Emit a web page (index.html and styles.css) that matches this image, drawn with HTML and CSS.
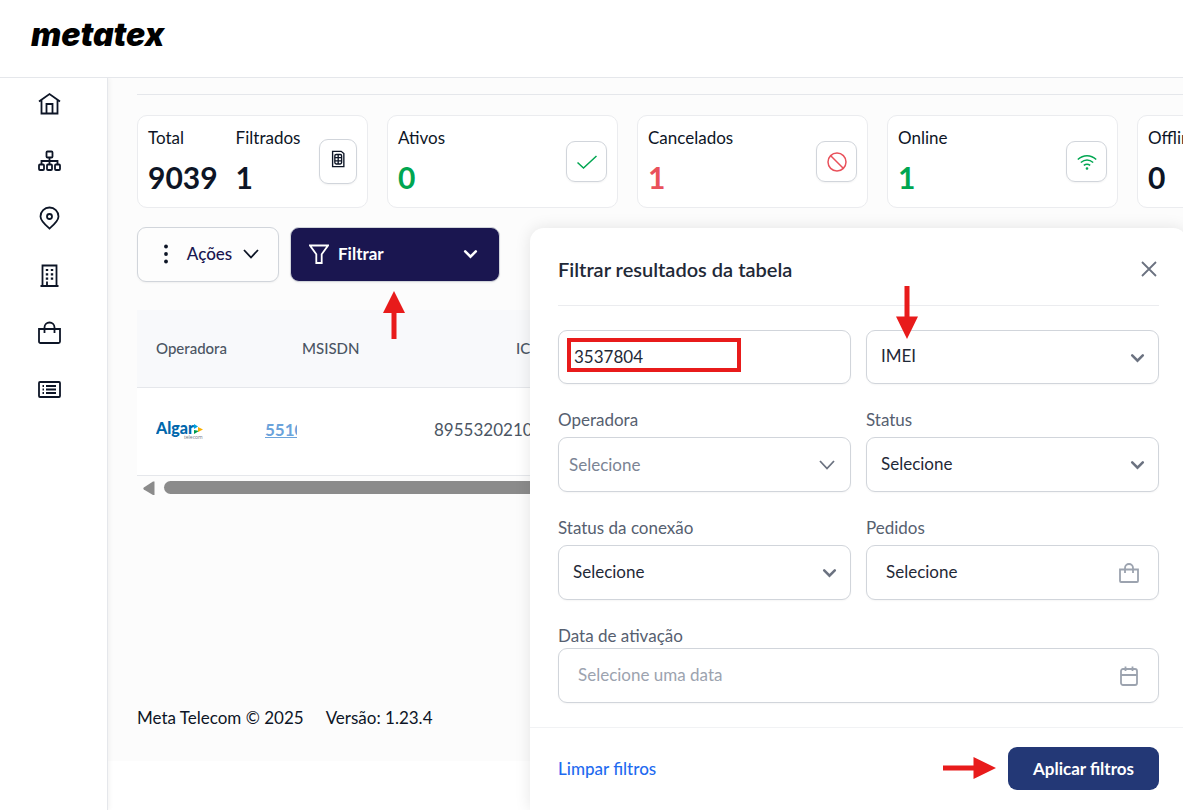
FILE: index.html
```html
<!DOCTYPE html>
<html lang="pt-BR">
<head>
    <meta charset="UTF-8">
    <meta name="viewport" content="width=device-width, initial-scale=1.0">
    <title>Metatex</title>
    <link rel="stylesheet" href="styles.css">
</head>
<body>
    <header class="topbar">
        <a href="#" class="brand">metatex</a>
    </header>
    <div class="layout">
        <nav class="sidebar" aria-label="Menu">
            <a href="#" aria-label="Início">
                <svg viewBox="0 0 24 24"><path d="M1 9.500 11.500 2 22 9.500M3.500 8v13.500h16V8M8.500 21.500V12h6v9.500"/></svg>
            </a>
            <a href="#" aria-label="Rede">
                <svg viewBox="0 0 24 24"><rect x="8.500" y="2.500" width="6" height="6" rx="1"/><rect x="1" y="15.500" width="5" height="5.500" rx="1"/><rect x="9" y="15.500" width="5" height="5.500" rx="1"/><rect x="17" y="15.500" width="5" height="5.500" rx="1"/><path d="M11.500 8.500v7M3.500 15.500V12h16v3.500"/></svg>
            </a>
            <a href="#" aria-label="Mapa">
                <svg viewBox="0 0 24 24"><path d="M11.500 22.500C8 19.500 2.500 15 2.500 10.500a9 9 0 0 1 18 0c0 4.500-5.500 9-9 12z"/><circle cx="11.500" cy="10.500" r="2.500"/></svg>
            </a>
            <a href="#" aria-label="Empresas">
                <svg viewBox="0 0 24 24"><path d="M4.500 22.500v-20h14v20M2.500 23h18M9 22.500v-4"/><path class="dots" d="M7.800 7h2.400M12.800 7h2.400M7.800 11.300h2.400M12.800 11.300h2.400M7.800 15.600h2.400M12.800 15.600h2.400"/></svg>
            </a>
            <a href="#" aria-label="Pedidos">
                <svg viewBox="0 0 24 24"><path d="M1 9h21v12.500a1.500 1.500 0 0 1-1.500 1.500h-18A1.500 1.500 0 0 1 1 21.500zM6.500 13V7.500a5 5 0 0 1 10 0V13"/></svg>
            </a>
            <a href="#" aria-label="Relatórios">
                <svg viewBox="0 0 24 24"><rect x="1" y="5" width="21" height="15" rx="1"/><path d="M4.500 9H6M8 9h10M4.500 12.500H6M8 12.500h10M4.500 16H6M8 16h10"/></svg>
            </a>
        </nav>

        <main class="content">
            <section class="cards">
                <div class="card">
                    <div class="stat"><span>Total</span><strong>9039</strong></div>
                    <div class="stat"><span>Filtrados</span><strong>1</strong></div>
                    <div class="card-icon tall">
                        <svg class="chip" viewBox="0 0 20 20"><path d="M4 1.500h9.500L16.500 4v14.500H4z"/><rect x="6.500" y="5" width="7.500" height="10.500" rx="1.500"/><path d="M6.500 8.500H14M6.500 12H14M10.200 5v10.500"/></svg>
                    </div>
                </div>
                <div class="card">
                    <div class="stat green"><span>Ativos</span><strong>0</strong></div>
                    <div class="card-icon green">
                        <svg viewBox="0 0 20 20"><path d="m.5 10.500 6 5.500L19.500 4"/></svg>
                    </div>
                </div>
                <div class="card">
                    <div class="stat red"><span>Cancelados</span><strong>1</strong></div>
                    <div class="card-icon red">
                        <svg viewBox="0 0 20 20"><circle cx="10" cy="10" r="9"/><path d="m3.500 3.500 13 13"/></svg>
                    </div>
                </div>
                <div class="card">
                    <div class="stat green"><span>Online</span><strong>1</strong></div>
                    <div class="card-icon green">
                        <svg viewBox="0 0 20 20"><path d="M.8 7.500c5.500-5 13-5 18.400 0M3.800 10.500c4-3.300 8.500-3.300 12.400 0M6.800 13.400c2.200-1.600 4.200-1.600 6.400 0"/><circle class="solid" cx="10" cy="16.500" r=".6"/></svg>
                    </div>
                </div>
                <div class="card">
                    <div class="stat"><span>Offline</span><strong>0</strong></div>
                </div>
            </section>

            <div class="toolbar">
                <button type="button" class="button is-light">
                    <svg class="more" viewBox="0 0 20 20"><circle cx="10" cy="2.500" r="1.900"/><circle cx="10" cy="10" r="1.900"/><circle cx="10" cy="17.500" r="1.900"/></svg>
                    Ações
                    <svg class="caret" viewBox="0 0 16 16"><path d="m1 4 7 7.500L15 4"/></svg>
                </button>
                <button type="button" class="button is-dark">
                    <svg class="funnel" viewBox="0 0 20 20"><path d="M1 1.500h18l-6.300 8.800v8.700H7.300v-8.700z"/></svg>
                    <span>Filtrar</span>
                    <svg class="chevron" viewBox="0 0 16 16"><path d="m3 6 5 5 5-5"/></svg>
                </button>
            </div>

            <div class="table-wrap">
                <table class="table">
                    <thead>
                        <tr><th class="col-op">Operadora</th><th class="col-msisdn">MSISDN</th><th class="col-iccid">ICCID</th></tr>
                    </thead>
                    <tbody>
                        <tr>
                            <td class="col-op">
                                <svg class="algar" viewBox="0 0 48 20" role="img" aria-label="Algar telecom">
                                    <text class="algar-name" x="0" y="14">Algar</text>
                                    <path fill="#00a3e0" d="m38 4 4 2.500-4 2.500z"/><path fill="#009b4c" d="m38 10 5 1-5 3z"/><path fill="#f9b000" d="m42 7 5 2.500-5 2.500z"/>
                                    <text class="algar-sub" x="28" y="19">telecom</text>
                                </svg>
                            </td>
                            <td><a href="#" class="number">551099</a></td>
                            <td>89553202100012</td>
                        </tr>
                    </tbody>
                </table>
                <div class="scrollbar">
                    <svg viewBox="0 0 12 14"><path d="M11.500.5v13.500H10L.8 8.500q-1-1 0-2L10 .5z"/></svg>
                    <div class="thumb"></div>
                </div>
            </div>

            <footer class="footer">
                <span>Meta Telecom © 2025</span>
                <span>Versão: 1.23.4</span>
            </footer>
        </main>
    </div>

    <form class="filter">
        <div class="filter-head">
            <h2>Filtrar resultados da tabela</h2>
            <button type="button" class="close" aria-label="Fechar">
                <svg viewBox="0 0 20 20"><path d="m3 3 14 14M17 3 3 17"/></svg>
            </button>
        </div>
        <div class="filter-body">
            <div class="field">
                <div class="control short"><input type="text" id="busca" aria-label="Busca" value="3537804"></div>
            </div>
            <div class="field">
                <div class="control short">
                    <select id="tipo" aria-label="Tipo"><option>IMEI</option></select>
                    <svg class="chevron" viewBox="0 0 16 16"><path d="m3 6 5 5 5-5"/></svg>
                </div>
            </div>
            <div class="field">
                <label for="operadora">Operadora</label>
                <div class="control muted">
                    <select id="operadora"><option>Selecione</option></select>
                    <svg class="caret" viewBox="0 0 16 16"><path d="m1 4 7 7.500L15 4"/></svg>
                </div>
            </div>
            <div class="field">
                <label for="status">Status</label>
                <div class="control">
                    <select id="status"><option>Selecione</option></select>
                    <svg class="chevron" viewBox="0 0 16 16"><path d="m3 6 5 5 5-5"/></svg>
                </div>
            </div>
            <div class="field">
                <label for="conexao">Status da conexão</label>
                <div class="control">
                    <select id="conexao"><option>Selecione</option></select>
                    <svg class="chevron" viewBox="0 0 16 16"><path d="m3 6 5 5 5-5"/></svg>
                </div>
            </div>
            <div class="field">
                <label for="pedidos">Pedidos</label>
                <div class="control with-icon">
                    <input type="text" id="pedidos" value="Selecione">
                    <svg class="icon" viewBox="0 0 20 20"><path d="M1 6.500h18V18a1 1 0 0 1-1 1H2a1 1 0 0 1-1-1zM6 10V5a4 4 0 0 1 8 0v5"/></svg>
                </div>
            </div>
            <div class="field wide">
                <label for="data">Data de ativação</label>
                <div class="control with-icon">
                    <input type="text" id="data" placeholder="Selecione uma data">
                    <svg class="icon" viewBox="0 0 20 20"><rect x="2" y="3" width="16" height="16" rx="2"/><path d="M2 9h16M6.500.5V5M13.500.5V5"/></svg>
                </div>
            </div>
        </div>
        <div class="filter-foot">
            <a href="#" class="clear">Limpar filtros</a>
            <button type="button" class="apply">Aplicar filtros</button>
        </div>
    </form>

    <svg class="arrow arrow-filtrar" viewBox="0 0 22 48"><path d="M11 0 22 22h-8.500v26h-5V22H0z"/></svg>
    <svg class="arrow arrow-imei" viewBox="0 0 22 53"><path d="M11 53 0 30.500h8.500V0h5v30.500H22z"/></svg>
    <svg class="arrow arrow-aplicar" viewBox="0 0 53 22"><path d="M53 11 30.500 22v-8.500H0v-5h30.500V0z"/></svg>
    <div class="mark"></div>
</body>
</html>
```
FILE: styles.css
```css
* {
    box-sizing: border-box;
}
html,body {
    height: 100%;
}
body {
    margin: 0;
    position: relative;
    overflow: hidden;
    display: flex;
    flex-direction: column;
    background: #fff;
    color: #0d1526;
    font-family: Lato,"Open Sans",sans-serif;
    font-size: 17px;
    line-height: 24px;
}
svg {
    fill: none;
    stroke: currentColor;
    stroke-width: 1.8;
    flex: none;
}
button,input,select {
    font: inherit;
    color: inherit;
}

.topbar {
    height: 78px;
    flex: none;
    padding: 17px 31px;
    border-bottom: 1px solid #e5e7eb;
}
.brand {
    color: #000;
    font: italic 900 32px/36px Inter,sans-serif;
    text-decoration: none;
}

.layout {
    flex: 1;
    display: flex;
    min-height: 0;
}
.sidebar {
    width: 108px;
    flex: none;
    padding: 14px 0 0 38px;
    display: flex;
    flex-direction: column;
    gap: 33px;
    border-right: 1px solid #e5e7eb;
    box-shadow: 1px 0 5px rgba(0,0,0,.06);
    clip-path: inset(0 -8px 0 0);
    z-index: 1;
}
.sidebar a {
    height: 24px;
    color: #0d1526;
}
.sidebar svg {
    width: 24px;
    height: 24px;
}
.sidebar .dots {
    stroke-width: 2.2;
}

.content {
    flex: 1;
    min-width: 0;
    align-self: flex-start;
    padding: 16px 0 31px 29px;
    background: #fcfcfc;
}
.cards {
    display: flex;
    gap: 19px;
    padding-top: 20px;
    border-top: 1px solid #e5e7eb;
}
.card {
    width: 231px;
    height: 93px;
    flex: none;
    display: flex;
    align-items: center;
    gap: 18px;
    padding: 0 10px;
    background: #fff;
    border: 1px solid #ebecef;
    border-radius: 10px;
}
.stat {
    display: flex;
    flex-direction: column;
    gap: 10px;
    padding-bottom: 4px;
}
.stat strong {
    font-size: 30px;
    line-height: 34px;
}
.green strong,.card-icon.green {
    color: #00a651;
}
.red strong,.card-icon.red {
    color: #e9515b;
}
.card-icon {
    width: 41px;
    height: 41px;
    margin-left: auto;
    display: flex;
    align-items: center;
    justify-content: center;
    border: 1px solid #d1d5db;
    border-radius: 9px;
    box-shadow: 0 1px 2px rgba(0,0,0,.05);
}
.card-icon.tall {
    width: 38px;
    height: 45px;
    padding-bottom: 5px;
}
.card-icon svg {
    width: 20px;
    height: 20px;
    stroke-width: 1.5;
}
.card-icon .chip {
    width: 18px;
    height: 18px;
}
.card-icon .solid {
    fill: currentColor;
}

.toolbar {
    display: flex;
    gap: 11px;
    margin-top: 19px;
}
.button {
    height: 55px;
    display: flex;
    align-items: center;
    border-radius: 9px;
    font-weight: 500;
    box-shadow: 0 1px 2px rgba(0,0,0,.05);
}
.is-light {
    width: 142px;
    padding: 0 19px 2px 18px;
    justify-content: space-between;
    color: #1a1650;
    background: #fdfdfd;
    border: 1px solid #d1d5db;
}
.is-light svg {
    color: #0d1526;
}
.is-dark {
    width: 210px;
    padding: 0 20px 2px 18px;
    gap: 9px;
    color: #fff;
    font-weight: 700;
    background: #1a1650;
    border: 1px solid #d1d5db;
}
.is-dark span {
    flex: 1;
    text-align: left;
}
.more {
    width: 20px;
    height: 20px;
    fill: currentColor;
    stroke: none;
}
.funnel {
    width: 20px;
    height: 20px;
}
.caret {
    width: 16px;
    height: 16px;
}
.chevron {
    width: 17px;
    height: 17px;
    stroke-width: 2.4;
    stroke-linecap: round;
}

.table-wrap {
    margin-top: 28px;
    overflow: hidden;
}
.table {
    width: 1046px;
    table-layout: fixed;
    border-collapse: collapse;
    text-align: left;
    color: #4b5563;
    background: #fff;
}
.table tr {
    border-bottom: 1px solid #e5e7eb;
}
.table th {
    height: 77px;
    padding: 0 19px;
    font-size: 15px;
    font-weight: 500;
    background: #f8f9fb;
}
.table td {
    height: 88px;
    padding: 0 19px 2px;
}
.table .col-op {
    width: 109px;
    padding-right: 0;
}
.table .col-msisdn {
    width: 169px;
    padding-left: 56px;
}
.table .col-iccid {
    padding-left: 101px;
}
.algar {
    display: block;
    width: 48px;
    height: 20px;
    stroke: none;
}
.algar-name {
    fill: #0067ac;
    font: 900 16px Lato,sans-serif;
}
.algar-sub {
    fill: #6b7280;
    font: 5px "Open Sans",sans-serif;
}
.number {
    display: block;
    width: 32px;
    overflow: hidden;
    color: #6ba3db;
    font-weight: 700;
}
.scrollbar {
    display: flex;
    align-items: center;
    gap: 9px;
    height: 24px;
    padding-left: 6px;
}
.scrollbar svg {
    width: 12px;
    height: 14px;
    fill: #8b8b8b;
    stroke: none;
}
.thumb {
    flex: 1;
    height: 13px;
    background: #8b8b8b;
    border-radius: 7px 0 0 7px;
}
.footer {
    display: flex;
    gap: 22px;
    margin-top: 206px;
}

/* filter dropdown */
.filter {
    position: absolute;
    top: 228px;
    left: 530px;
    right: -4px;
    bottom: 0;
    z-index: 2;
    background: #fff;
    border-radius: 14px 14px 0 0;
    box-shadow: 0 0 16px rgba(0,0,0,.1);
}
.filter-head {
    display: flex;
    align-items: center;
    justify-content: space-between;
    height: 78px;
    margin: 0 28px;
    padding-top: 5px;
    border-bottom: 1px solid #ebecef;
}
.filter-head h2 {
    margin: 0;
    font-size: 20px;
    font-weight: 600;
    color: #1f2937;
}
.close {
    padding: 0;
    height: 20px;
    color: #6b7280;
    background: none;
    border: none;
}
.close svg {
    display: block;
    width: 20px;
    height: 20px;
}
.filter-body {
    display: grid;
    grid-template-columns: 1fr 1fr;
    gap: 24px 15px;
    padding: 24px 28px;
}
.field {
    display: flex;
    flex-direction: column;
    gap: 5px;
}
.wide {
    grid-column: span 2;
    gap: 0;
}
.field label {
    color: #566070;
}
.control {
    height: 55px;
    display: grid;
    align-items: center;
    color: #1f2937;
}
.control.short {
    height: 54px;
}
.control > * {
    grid-area: 1 / 1;
}
.control input,.control select {
    width: 100%;
    height: 100%;
    padding: 0 15px 2px;
    appearance: none;
    background: #fff;
    border: 1px solid #d1d5db;
    border-radius: 9px;
    outline: none;
    box-shadow: 0 1px 2px rgba(0,0,0,.04);
}
.control select {
    padding-left: 14px;
}
.control svg {
    justify-self: end;
    margin-right: 13px;
    color: #6b7280;
    pointer-events: none;
}
.control.muted select {
    padding: 0 10px;
    color: #7b8494;
}
.control.muted svg {
    margin-right: 16px;
}
.control.with-icon input {
    padding: 0 19px 2px;
}
.control .icon {
    width: 20px;
    height: 20px;
    margin-right: 20px;
    color: #9ca3af;
}
.control input::placeholder {
    color: #9ca3af;
    opacity: 1;
}
.filter-foot {
    display: flex;
    align-items: center;
    justify-content: space-between;
    padding: 19px 28px;
    border-top: 1px solid #f1f2f4;
}
.clear {
    color: #1f6bf0;
    font-weight: 500;
    text-decoration: none;
}
.apply {
    height: 43px;
    padding: 0 25px;
    color: #fff;
    font-weight: 700;
    background: #233876;
    border: none;
    border-radius: 9px;
}

/* callouts */
.arrow {
    position: absolute;
    z-index: 3;
    fill: #e81b1b;
    stroke: none;
}
.arrow-filtrar {
    top: 291px;
    left: 383px;
    width: 22px;
    height: 48px;
}
.arrow-imei {
    top: 286px;
    left: 896px;
    width: 22px;
    height: 53px;
}
.arrow-aplicar {
    top: 757px;
    left: 943px;
    width: 53px;
    height: 22px;
}
.mark {
    position: absolute;
    z-index: 3;
    top: 338px;
    left: 567px;
    width: 174px;
    height: 34px;
    border: 4px solid #e81b1b;
}
```
